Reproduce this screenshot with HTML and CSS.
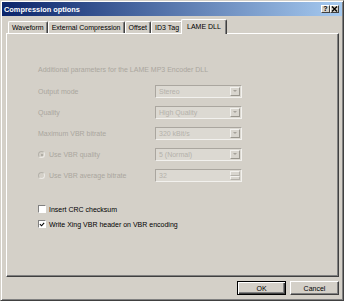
FILE: index.html
```html
<!DOCTYPE html>
<html>
<head>
  <title>Compression options</title>
  <link rel="stylesheet" href="styles.css">
</head>

<body>
  <div class="window">
    <div class="titlebar">
      <span class="title">Compression options</span>
      <div class="title-buttons">
        <span class="tbtn tbtn-help">?</span>
        <span class="tbtn tbtn-close">
          <svg width="7" height="6" viewBox="0 0 7 6">
            <path d="M1 0.5 L6 5.5 M6 0.5 L1 5.5" stroke="#000" stroke-width="1.4" fill="none"/>
          </svg>
        </span>
      </div>
    </div>

    <div class="content">
      <div class="tabs">
        <div class="tab">Waveform</div>
        <div class="tab">External Compression</div>
        <div class="tab">Offset</div>
        <div class="tab">ID3 Tag</div>
        <div class="tab tab-active">LAME DLL</div>
      </div>

      <div class="panel">
        <p class="intro disabled">Additional parameters for the LAME MP3 Encoder DLL</p>

        <div class="fields">
          <div class="row">
            <span class="label disabled">Output mode</span>
            <div class="combo"><span class="combo-text">Stereo</span><span class="combo-arrow"></span></div>
          </div>
          <div class="row">
            <span class="label disabled">Quality</span>
            <div class="combo"><span class="combo-text">High Quality</span><span class="combo-arrow"></span></div>
          </div>
          <div class="row">
            <span class="label disabled">Maximum VBR bitrate</span>
            <div class="combo"><span class="combo-text">320 kBit/s</span><span class="combo-arrow"></span></div>
          </div>
          <div class="row">
            <span class="label disabled"><span class="radio radio-on"></span>Use VBR quality</span>
            <div class="combo"><span class="combo-text">5 (Normal)</span><span class="combo-arrow"></span></div>
          </div>
          <div class="row">
            <span class="label disabled"><span class="radio"></span>Use VBR average bitrate</span>
            <div class="combo spin"><span class="combo-text">32</span>
              <span class="spin-buttons"><span class="spin-up"></span><span class="spin-down"></span></span>
            </div>
          </div>
        </div>

        <div class="checks">
          <div class="check-row"><span class="checkbox"></span>Insert CRC checksum</div>
          <div class="check-row"><span class="checkbox">
            <svg width="7" height="7" viewBox="0 0 7 7">
              <path d="M1 3 L3 5 L6 1.5" stroke="#000" stroke-width="1.3" fill="none"/>
            </svg>
          </span>Write Xing VBR header on VBR encoding</div>
        </div>
      </div>

      <div class="buttons">
        <button class="btn btn-default">OK</button>
        <button class="btn">Cancel</button>
      </div>
    </div>
  </div>
</body>
</html>
```

FILE: styles.css
```css
body {
  margin: 0;
  background-color: #d4d0c8;
  font-family: "Liberation Sans", Arial, sans-serif;
  font-size: 7px;
  color: #000;
}

.window {
  width: 344px;
  height: 301px;
  box-sizing: border-box;
  border: 1px solid;
  border-color: #d4d0c8 #404040 #404040 #d4d0c8;
  box-shadow: inset 1px 1px #fff, inset -1px -1px #808080;
  padding: 1px;
  background-color: #d4d0c8;
}

.titlebar {
  height: 14px;
  display: flex;
  align-items: center;
  justify-content: space-between;
  padding: 0 3px 0 2px;
  background: linear-gradient(to right, #0a246a, #a6caf0);
}

.title {
  color: #fff;
  font-weight: bold;
  font-size: 7.4px;
}

.title-buttons {
  display: flex;
  gap: 0;
}

.tbtn {
  width: 9px;
  height: 8px;
  box-sizing: border-box;
  background-color: #d4d0c8;
  border: 1px solid;
  border-color: #fff #404040 #404040 #fff;
  display: flex;
  align-items: center;
  justify-content: center;
  font-weight: bold;
  font-size: 7px;
  line-height: 6px;
}

.content {
  padding: 2px 3px 0 4px;
}

.tabs {
  display: flex;
  align-items: flex-end;
  height: 15px;
  padding-left: 2px;
}

.tab {
  height: 12px;
  box-sizing: border-box;
  padding: 1px 3px 0;
  border-top: 1px solid #fff;
  border-left: 1px solid #fff;
  border-right: 1px solid #404040;
  box-shadow: inset -1px 0 #808080;
  border-radius: 2px 2px 0 0;
  line-height: 9px;
  white-space: nowrap;
}

.tab-active {
  height: 15px;
  margin: 0 -2px -1px;
  padding: 2px 5px 0;
  position: relative;
  z-index: 1;
  background-color: #d4d0c8;
}

.panel {
  height: 244px;
  box-sizing: border-box;
  border: 1px solid;
  border-color: #fff #404040 #404040 #fff;
  box-shadow: inset -1px -1px #808080;
  padding: 31px 0 0 31px;
}

.disabled {
  color: #aaa69e;
}

.intro {
  margin: 0 0 10px;
  line-height: 10px;
}

.fields {
  display: flex;
  flex-direction: column;
  gap: 8px;
}

.row {
  display: flex;
  align-items: center;
  height: 13px;
}

.label {
  width: 117px;
  display: flex;
  align-items: center;
}

.combo {
  width: 87px;
  height: 13px;
  box-sizing: border-box;
  border: 1px solid;
  border-color: #aaa69f #f2f1ee #f2f1ee #aaa69f;
  background-color: #dcd9d2;
  color: #b4b1aa;
  display: flex;
  align-items: center;
  justify-content: space-between;
  padding: 1px 1px 1px 3px;
}

.combo-arrow {
  width: 10px;
  height: 9px;
  box-sizing: border-box;
  border: 1px solid;
  border-color: #f2f1ee #9a978f #9a978f #f2f1ee;
  background-color: #d8d5ce;
  position: relative;
}

.combo-arrow::after {
  content: '';
  position: absolute;
  left: 2px;
  top: 2px;
  border-left: 2px solid transparent;
  border-right: 2px solid transparent;
  border-top: 2px solid #a5a29a;
}

.spin-buttons {
  width: 10px;
  height: 9px;
  display: flex;
  flex-direction: column;
}

.spin-up,
.spin-down {
  flex: 1;
  border: 1px solid;
  border-color: #f2f1ee #b5b2ab #b5b2ab #f2f1ee;
  background-color: #d8d5ce;
}

.radio {
  width: 7px;
  height: 7px;
  box-sizing: border-box;
  border-radius: 50%;
  border: 1px solid #b5b2ab;
  border-right-color: #eceae6;
  border-bottom-color: #eceae6;
  background-color: #d4d0c8;
  margin-right: 4px;
  display: flex;
  align-items: center;
  justify-content: center;
}

.radio-on::after {
  content: '';
  width: 2px;
  height: 2px;
  border-radius: 50%;
  background-color: #a5a29a;
}

.checks {
  margin-top: 22px;
  display: flex;
  flex-direction: column;
  gap: 5px;
}

.check-row {
  display: flex;
  align-items: center;
  height: 10px;
}

.checkbox {
  width: 8px;
  height: 8px;
  box-sizing: border-box;
  border: 1px solid;
  border-color: #808080 #fff #fff #808080;
  background-color: #fff;
  margin-right: 3px;
  display: flex;
  align-items: center;
  justify-content: center;
}

.buttons {
  display: flex;
  justify-content: flex-end;
  gap: 4px;
  margin-top: 4px;
}

.btn {
  width: 49px;
  height: 14px;
  box-sizing: border-box;
  font-family: "Liberation Sans", Arial, sans-serif;
  font-size: 7px;
  background-color: #d4d0c8;
  border: 1px solid;
  border-color: #fff #404040 #404040 #fff;
  box-shadow: inset -1px -1px #808080;
  padding: 0;
  color: #000;
}

.btn-default {
  border: 1px solid #000;
  box-shadow: inset 1px 1px #fff, inset -1px -1px #404040, inset -2px -2px #808080;
}
```
